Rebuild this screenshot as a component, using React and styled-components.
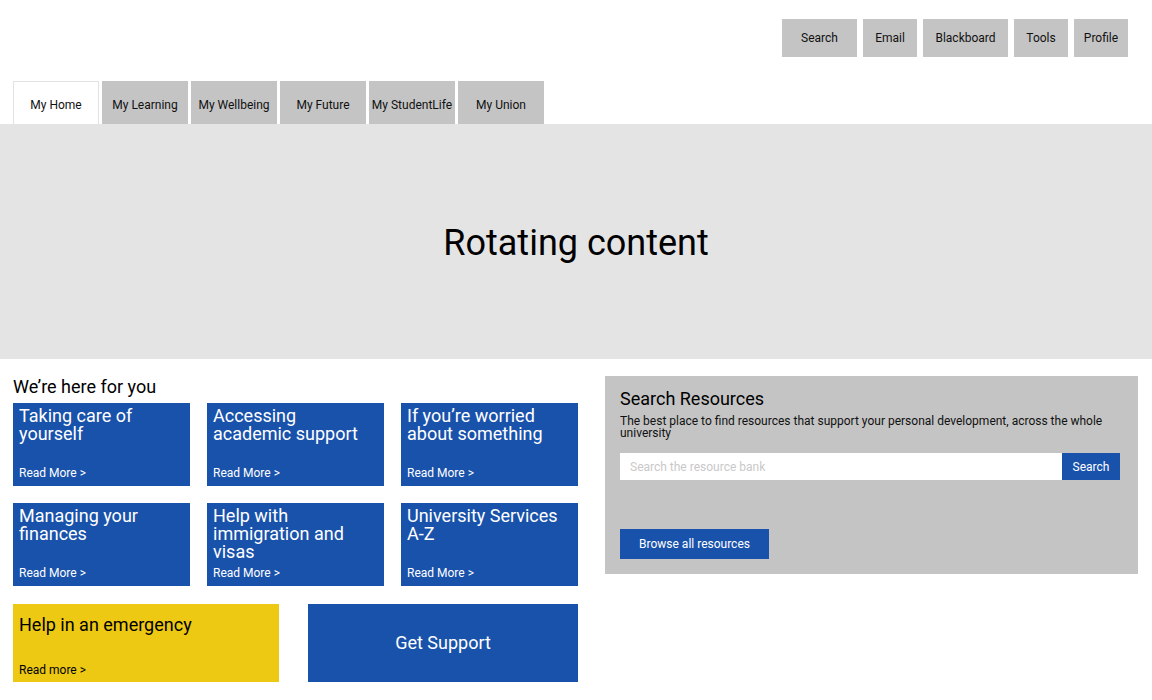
import React from "react";
import styled, { createGlobalStyle } from "styled-components";

const BLUE = "#1952ab";
const GREY = "#c4c4c4";

const GlobalStyle = createGlobalStyle`
  html, body {
    margin: 0;
    padding: 0;
    background: #fff;
  }
  body {
    font-family: Roboto, "Liberation Sans", Arial, sans-serif;
    color: #000;
  }
  * {
    box-sizing: border-box;
  }
`;

const Page = styled.div`
  width: 1152px;
  min-height: 700px;
`;

const TopBar = styled.nav`
  display: flex;
  justify-content: flex-end;
  gap: 6px;
  padding: 19px 24px 0 0;
  height: 81px;
`;

const TopButton = styled.button`
  height: 38px;
  width: ${({ w }) => w}px;
  border: none;
  background: ${GREY};
  font-family: inherit;
  font-size: 12px;
  color: #111;
  padding: 0;
  cursor: pointer;
`;

const Tabs = styled.div`
  display: flex;
  gap: 3px;
  padding-left: 13px;
  height: 43px;
`;

const Tab = styled.div`
  width: 86px;
  height: 43px;
  text-align: center;
  font-size: 12px;
  color: #111;
  white-space: nowrap;
  background: ${({ active }) => (active ? "#fff" : GREY)};
  border: ${({ active }) => (active ? "1px solid #e2e2e2" : "none")};
  border-bottom: none;
  padding-top: ${({ active }) => (active ? "16px" : "17px")};
`;

const Hero = styled.div`
  height: 235px;
  background: #e4e4e4;
  display: flex;
  align-items: center;
  justify-content: center;
  font-size: 36px;
  padding-top: 3px;
`;

const Lower = styled.div`
  display: flex;
  gap: 27px;
  padding: 17px 14px 0 13px;
`;

const LeftCol = styled.div`
  width: 565px;
`;

const Heading = styled.h2`
  margin: 0 0 6px;
  font-size: 18px;
  font-weight: 400;
  line-height: 21px;
`;

const CardGrid = styled.div`
  display: grid;
  grid-template-columns: repeat(3, 177px);
  column-gap: 17px;
  row-gap: 17px;
`;

const Card = styled.a`
  display: flex;
  flex-direction: column;
  justify-content: space-between;
  height: 83px;
  padding: 4px 10px 6px 6px;
  background: ${BLUE};
  color: #fff;
  text-decoration: none;
`;

const CardTitle = styled.div`
  font-size: 18px;
  line-height: 18px;
`;

const ReadMore = styled.span`
  font-size: 12px;
  line-height: 14px;
`;

const BottomRow = styled.div`
  display: flex;
  gap: 29px;
  margin-top: 18px;
`;

const Emergency = styled.a`
  display: flex;
  flex-direction: column;
  justify-content: space-between;
  width: 266px;
  height: 78px;
  padding: 12px 8px 5px 6px;
  background: #edc914;
  color: #000;
  text-decoration: none;
`;

const SupportButton = styled.a`
  display: flex;
  align-items: center;
  justify-content: center;
  width: 270px;
  height: 78px;
  background: ${BLUE};
  color: #fff;
  font-size: 18px;
  text-decoration: none;
  padding-bottom: 2px;
`;

const Panel = styled.section`
  width: 533px;
  height: 198px;
  background: ${GREY};
  padding: 12px 18px 15px 15px;
`;

const PanelTitle = styled.h3`
  margin: 0;
  font-size: 18px;
  font-weight: 400;
  line-height: 21px;
`;

const PanelText = styled.p`
  margin: 6px 0 0;
  font-size: 12px;
  line-height: 12px;
  color: #111;
`;

const SearchRow = styled.form`
  display: flex;
  margin-top: 14px;
  height: 27px;
`;

const SearchInput = styled.input`
  flex: 1;
  height: 27px;
  border: none;
  outline: none;
  padding: 0 10px;
  font-family: inherit;
  font-size: 12px;
  background: #fff;

  &::placeholder {
    color: #c9c9c9;
  }
`;

const BlueButton = styled.button`
  height: ${({ h }) => h}px;
  width: ${({ w }) => w}px;
  border: none;
  padding: 0;
  background: ${BLUE};
  color: #fff;
  font-family: inherit;
  font-size: 12px;
  cursor: pointer;
`;

const BrowseWrap = styled.div`
  margin-top: 49px;
`;

const topLinks = [
  ["Search", 75],
  ["Email", 54],
  ["Blackboard", 85],
  ["Tools", 54],
  ["Profile", 54],
];

const tabs = [
  "My Home",
  "My Learning",
  "My Wellbeing",
  "My Future",
  "My StudentLife",
  "My Union",
];

const cards = [
  "Taking care of yourself",
  "Accessing academic support",
  "If you’re worried about something",
  "Managing your finances",
  "Help with immigration and visas",
  "University Services A-Z",
];

export default function App() {
  return (
    <Page>
      <GlobalStyle />
      <TopBar>
        {topLinks.map(([label, w]) => (
          <TopButton key={label} w={w}>
            {label}
          </TopButton>
        ))}
      </TopBar>
      <Tabs>
        {tabs.map((t, i) => (
          <Tab key={t} active={i === 0}>
            {t}
          </Tab>
        ))}
      </Tabs>
      <Hero>Rotating content</Hero>
      <Lower>
        <LeftCol>
          <Heading>We’re here for you</Heading>
          <CardGrid>
            {cards.map((c) => (
              <Card key={c} href="#">
                <CardTitle>{c}</CardTitle>
                <ReadMore>Read More &gt;</ReadMore>
              </Card>
            ))}
          </CardGrid>
          <BottomRow>
            <Emergency href="#">
              <CardTitle>Help in an emergency</CardTitle>
              <ReadMore>Read more &gt;</ReadMore>
            </Emergency>
            <SupportButton href="#">Get Support</SupportButton>
          </BottomRow>
        </LeftCol>
        <Panel>
          <PanelTitle>Search Resources</PanelTitle>
          <PanelText>
            The best place to find resources that support your personal
            development, across the whole university
          </PanelText>
          <SearchRow onSubmit={(e) => e.preventDefault()}>
            <SearchInput placeholder="Search the resource bank" />
            <BlueButton w={58} h={27}>
              Search
            </BlueButton>
          </SearchRow>
          <BrowseWrap>
            <BlueButton w={149} h={30}>
              Browse all resources
            </BlueButton>
          </BrowseWrap>
        </Panel>
      </Lower>
    </Page>
  );
}
